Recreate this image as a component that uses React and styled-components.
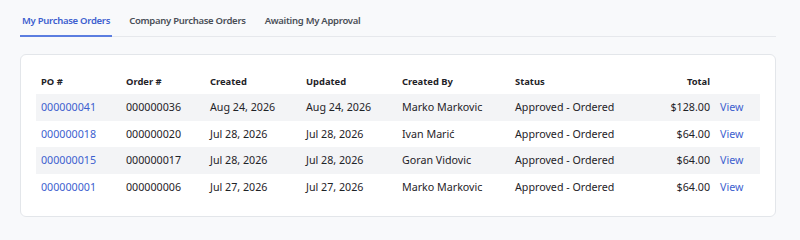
import React from 'react'
import styled, { createGlobalStyle } from 'styled-components'

const GlobalStyle = createGlobalStyle`
  body {
    margin: 0;
    background: #f8f9fb;
    font-family: "Noto Sans", "Open Sans", sans-serif;
    color: #1f2328;
  }
`

const Page = styled.div`
  width: 756px;
  padding: 0 24px 0 20px;
`

const TabBar = styled.div`
  display: flex;
  gap: 15px;
  border-bottom: 1px solid #e6e8ec;
`

const Tab = styled.div`
  padding: 14px 2px 7px;
  line-height: 14px;
  font-size: 9.5px;
  font-weight: 600;
  letter-spacing: -0.28px;
  color: ${p => (p.$active ? '#3d5fcf' : '#4a4f57')};
  border-bottom: 2px solid ${p => (p.$active ? '#5b7de0' : 'transparent')};
  margin-bottom: -1px;
`

const Card = styled.div`
  margin-top: 17px;
  background: #fff;
  border: 1px solid #e3e6ea;
  border-radius: 6px;
  padding: 13px 15px 16px;
`

const Row = styled.div`
  display: grid;
  grid-template-columns: 85px 84px 96px 96px 113px 1fr 84px 45px;
  height: ${p => (p.$head ? '26px' : '26.5px')};
  align-items: center;
  background: ${p => (p.$striped ? '#f3f4f6' : 'transparent')};
  font-size: ${p => (p.$head ? '9.4px' : '10.7px')};
  font-weight: ${p => (p.$head ? 700 : 400)};
`

const Cell = styled.div`
  padding: 0 5px;
  white-space: nowrap;
  text-align: ${p => (p.$right ? 'right' : 'left')};
`

const Link = styled.a`
  color: #3d5fcf;
  text-decoration: none;
`

const orders = [
  { po: '000000041', order: '000000036', created: 'Aug 24, 2026', updated: 'Aug 24, 2026', by: 'Marko Markovic', total: '$128.00' },
  { po: '000000018', order: '000000020', created: 'Jul 28, 2026', updated: 'Jul 28, 2026', by: 'Ivan Marić', total: '$64.00' },
  { po: '000000015', order: '000000017', created: 'Jul 28, 2026', updated: 'Jul 28, 2026', by: 'Goran Vidovic', total: '$64.00' },
  { po: '000000001', order: '000000006', created: 'Jul 27, 2026', updated: 'Jul 27, 2026', by: 'Marko Markovic', total: '$64.00' },
]

export default function App() {
  return (
    <>
      <GlobalStyle />
      <Page>
        <TabBar>
          <Tab $active>My Purchase Orders</Tab>
          <Tab>Company Purchase Orders</Tab>
          <Tab>Awaiting My Approval</Tab>
        </TabBar>
        <Card>
          <Row $head>
            <Cell>PO #</Cell>
            <Cell>Order #</Cell>
            <Cell>Created</Cell>
            <Cell>Updated</Cell>
            <Cell>Created By</Cell>
            <Cell>Status</Cell>
            <Cell $right>Total</Cell>
            <Cell />
          </Row>
          {orders.map((o, i) => (
            <Row key={o.po} $striped={i % 2 === 0}>
              <Cell><Link href="#">{o.po}</Link></Cell>
              <Cell>{o.order}</Cell>
              <Cell>{o.created}</Cell>
              <Cell>{o.updated}</Cell>
              <Cell>{o.by}</Cell>
              <Cell>Approved - Ordered</Cell>
              <Cell $right>{o.total}</Cell>
              <Cell><Link href="#">View</Link></Cell>
            </Row>
          ))}
        </Card>
      </Page>
    </>
  )
}
